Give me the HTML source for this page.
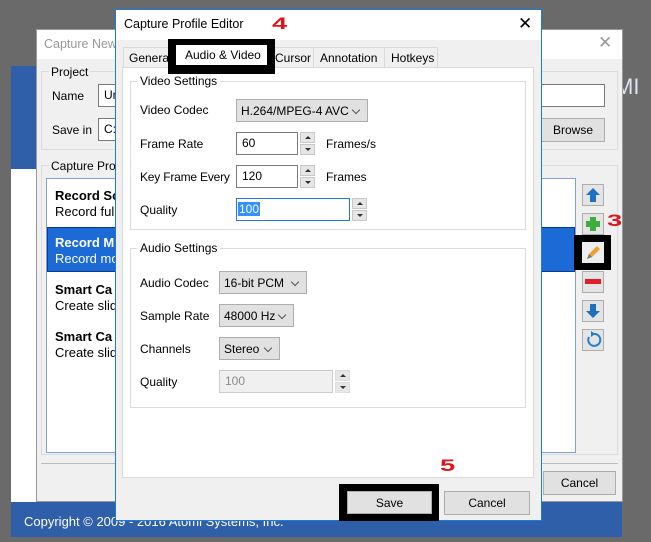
<!DOCTYPE html>
<html><head><meta charset="utf-8"><style>
*{box-sizing:border-box;margin:0;padding:0}
body{width:651px;height:542px;background:#6a6a6a;position:relative;overflow:hidden;font-family:"Liberation Sans",sans-serif;font-size:12px;color:#000}
.a{position:absolute}
.btn{position:absolute;background:#e1e1e1;border:1px solid #adadad;text-align:center}
.tb{position:absolute;background:#fff;border:1px solid #7a7a7a;padding:3px 0 0 5px}
.dd{position:absolute;background:#e1e1e1;border:1px solid #adadad;padding:4px 0 0 4px}
.dd:after{content:"";position:absolute;right:8px;top:7px;width:5px;height:5px;border-right:1px solid #555;border-bottom:1px solid #555;transform:rotate(45deg)}
.sp{position:absolute;width:15px;height:11px;background:#e6e6e6;border:1px solid #c8c8c8}
.sp:after{content:"";position:absolute;left:4px;top:3px;border-left:3px solid transparent;border-right:3px solid transparent}
.up:after{border-bottom:3px solid #333}
.dn:after{border-top:3px solid #333}
.grp{position:absolute;border:1px solid #dcdcdc}
.grp span{position:absolute;top:-8px;left:6px;background:#fff;padding:0 3px}
.rb{position:absolute;left:582px;width:22px;height:22px;background:#e4e4e4;border:1px solid #adadad}
.num{position:absolute;color:#e0141c;font-weight:bold;font-family:"Liberation Sans",sans-serif;font-size:17px;transform:scaleX(1.6);transform-origin:left}
</style></head><body>
<div class="a" style="left:11px;top:66px;width:611px;height:471px;background:#fff"></div>
<div class="a" style="left:11px;top:66px;width:611px;height:103px;background:#2f5fa8"></div>
<div class="a" style="left:11px;top:502px;width:611px;height:35px;background:#2f5fa8"></div>
<div class="a" style="left:24px;top:514px;color:#fff;font-size:13px">Copyright © 2009 - 2016 Atomi Systems, Inc.</div>
<div class="a" style="left:615px;top:74px;color:#dbe4f2;font-size:22px">MI</div>
<div class="a" style="left:36px;top:29px;width:587px;height:473px;background:#f0f0f0;border:1px solid #9a9a9a"></div>
<div class="a" style="left:37px;top:30px;width:585px;height:29px;background:#fff"></div>
<div class="a" style="left:44px;top:37px;color:#999;font-size:12.5px">Capture New</div>
<div class="a" style="left:598px;top:33px;color:#999;font-size:17px">✕</div>
<div class="a" style="left:41px;top:71px;width:577px;height:79px;border:1px solid #dcdcdc"></div>
<div class="a" style="left:49px;top:65px;background:#f0f0f0;padding:0 2px">Project</div>
<div class="a" style="left:52px;top:89px">Name</div>
<div class="a" style="left:52px;top:123px">Save in</div>
<div class="tb" style="left:98px;top:84px;width:507px;height:23px">Un</div>
<div class="tb" style="left:98px;top:118px;width:30px;height:23px">C:</div>
<div class="btn" style="left:541px;top:118px;width:64px;height:24px;padding-top:4px">Browse</div>
<div class="a" style="left:41px;top:165px;width:577px;height:290px;border:1px solid #dcdcdc"></div>
<div class="a" style="left:49px;top:159px;background:#f0f0f0;padding:0 2px">Capture Prof</div>
<div class="a" style="left:46px;top:178px;width:530px;height:275px;background:#fff;border:1px solid #82a2d4"></div>
<div class="a" style="left:47px;top:227px;width:528px;height:45px;background:#1b6ad6;border:1px solid #0a3a8a"></div>
<div class="a" style="left:55px;top:188px;font-weight:bold;font-size:13px">Record Sc</div>
<div class="a" style="left:55px;top:204px;font-size:13px">Record full</div>
<div class="a" style="left:55px;top:235px;font-weight:bold;font-size:13px;color:#fff">Record M</div>
<div class="a" style="left:55px;top:251px;font-size:13px;color:#fff">Record mo</div>
<div class="a" style="left:55px;top:282px;font-weight:bold;font-size:13px">Smart Ca</div>
<div class="a" style="left:55px;top:298px;font-size:13px">Create slid</div>
<div class="a" style="left:55px;top:329px;font-weight:bold;font-size:13px">Smart Ca</div>
<div class="a" style="left:55px;top:345px;font-size:13px">Create slid</div>
<div class="rb" style="top:184px"><svg width="20" height="20"><path d="M10 3 L17 10 H13 V17 H7 V10 H3 Z" fill="#1f70c0"/></svg></div>
<div class="rb" style="top:213px"><svg width="20" height="20"><path d="M7 3H13V7H17V13H13V17H7V13H3V7H7Z" fill="#3cae3c"/></svg></div>
<div class="a" style="left:574px;top:235px;width:37px;height:35px;background:#000"></div>
<div class="a" style="left:582px;top:242px;width:22px;height:21px;background:#eee"><svg width="22" height="21"><path d="M5 17 L7 12 L15 4 L18 7 L10 15 Z" fill="#f0a030"/><path d="M5 17 L7 12 L10 15Z" fill="#777"/></svg></div>
<div class="rb" style="top:271px"><svg width="20" height="20"><rect x="2" y="7" width="16" height="5" fill="#e01e2a"/></svg></div>
<div class="rb" style="top:300px"><svg width="20" height="20"><path d="M10 17 L17 10 H13 V3 H7 V10 H3 Z" fill="#1f70c0"/></svg></div>
<div class="rb" style="top:329px"><svg width="20" height="20"><path d="M6 7 A6 6 0 1 0 10 4" fill="none" stroke="#1f80c8" stroke-width="2"/><path d="M8 1 L12 4 L8 7Z" fill="#1f80c8"/></svg></div>
<div class="num" style="left:607px;top:211px">3</div>
<div class="a" style="left:41px;top:463px;width:577px;height:1px;background:#bbb"></div>
<div class="btn" style="left:543px;top:471px;width:73px;height:24px;padding-top:4px">Cancel</div>
<div class="a" style="left:115px;top:9px;width:427px;height:512px;background:#f0f0f0;border:1px solid #1c7ad8"></div>
<div class="a" style="left:116px;top:10px;width:425px;height:30px;background:#fff"></div>
<div class="a" style="left:124px;top:17px;font-size:12.5px">Capture Profile Editor</div>
<div class="num" style="left:272px;top:14px">4</div>
<div class="a" style="left:518px;top:14px;font-size:17px">✕</div>
<div class="a" style="left:122px;top:67px;width:412px;height:411px;background:#fff;border:1px solid #dadada"></div>
<div class="a" style="left:123px;top:47px;width:50px;height:21px;border:1px solid #dadada;padding:3px 0 0 5px">General</div>
<div class="a" style="left:272px;top:47px;width:42px;height:21px;border:1px solid #dadada;padding:3px 0 0 2px">Cursor</div>
<div class="a" style="left:313px;top:47px;width:72px;height:21px;border:1px solid #dadada;padding:3px 0 0 6px;background:#f0f0f0">Annotation</div>
<div class="a" style="left:384px;top:47px;width:54px;height:21px;border:1px solid #dadada;padding:3px 0 0 6px;background:#f0f0f0">Hotkeys</div>
<div class="a" style="left:168px;top:39px;width:107px;height:35px;background:#000"></div>
<div class="a" style="left:176px;top:45px;width:91px;height:20px;background:#fff;padding:3px 0 0 9px">Audio &amp; Video</div>
<div class="grp" style="left:130px;top:81px;width:396px;height:149px"><span>Video Settings</span></div>
<div class="a" style="left:140px;top:103px">Video Codec</div>
<div class="dd" style="left:236px;top:99px;width:132px;height:23px">H.264/MPEG-4 AVC</div>
<div class="a" style="left:140px;top:137px">Frame Rate</div>
<div class="tb" style="left:236px;top:132px;width:62px;height:23px">60</div>
<div class="sp up" style="left:300px;top:132px"></div><div class="sp dn" style="left:300px;top:144px"></div>
<div class="a" style="left:326px;top:137px">Frames/s</div>
<div class="a" style="left:140px;top:170px;letter-spacing:-0.2px">Key Frame Every</div>
<div class="tb" style="left:236px;top:165px;width:62px;height:23px">120</div>
<div class="sp up" style="left:300px;top:165px"></div><div class="sp dn" style="left:300px;top:177px"></div>
<div class="a" style="left:326px;top:170px">Frames</div>
<div class="a" style="left:140px;top:203px">Quality</div>
<div class="tb" style="left:236px;top:198px;width:114px;height:23px;border-color:#1c7ad8;padding-left:1px"><span style="background:#3390ff;color:#fff;padding:0 1px">100</span></div>
<div class="sp up" style="left:352px;top:198px"></div><div class="sp dn" style="left:352px;top:210px"></div>
<div class="grp" style="left:130px;top:248px;width:396px;height:160px"><span>Audio Settings</span></div>
<div class="a" style="left:140px;top:276px">Audio Codec</div>
<div class="dd" style="left:219px;top:271px;width:88px;height:23px">16-bit PCM</div>
<div class="a" style="left:140px;top:309px">Sample Rate</div>
<div class="dd" style="left:219px;top:304px;width:75px;height:23px">48000 Hz</div>
<div class="a" style="left:140px;top:342px">Channels</div>
<div class="dd" style="left:219px;top:337px;width:61px;height:23px">Stereo</div>
<div class="a" style="left:140px;top:375px">Quality</div>
<div class="tb" style="left:219px;top:370px;width:114px;height:23px;background:#f0f0f0;border-color:#ccc;color:#8a8a8a">100</div>
<div class="sp up" style="left:335px;top:370px;border-color:#ddd"></div><div class="sp dn" style="left:335px;top:382px;border-color:#ddd"></div>
<div class="num" style="left:440px;top:456px">5</div>
<div class="a" style="left:339px;top:484px;width:100px;height:37px;background:#000"></div>
<div class="btn" style="left:347px;top:491px;width:85px;height:23px;padding-top:4px">Save</div>
<div class="btn" style="left:444px;top:491px;width:86px;height:24px;padding-top:4px">Cancel</div>
</body></html>
